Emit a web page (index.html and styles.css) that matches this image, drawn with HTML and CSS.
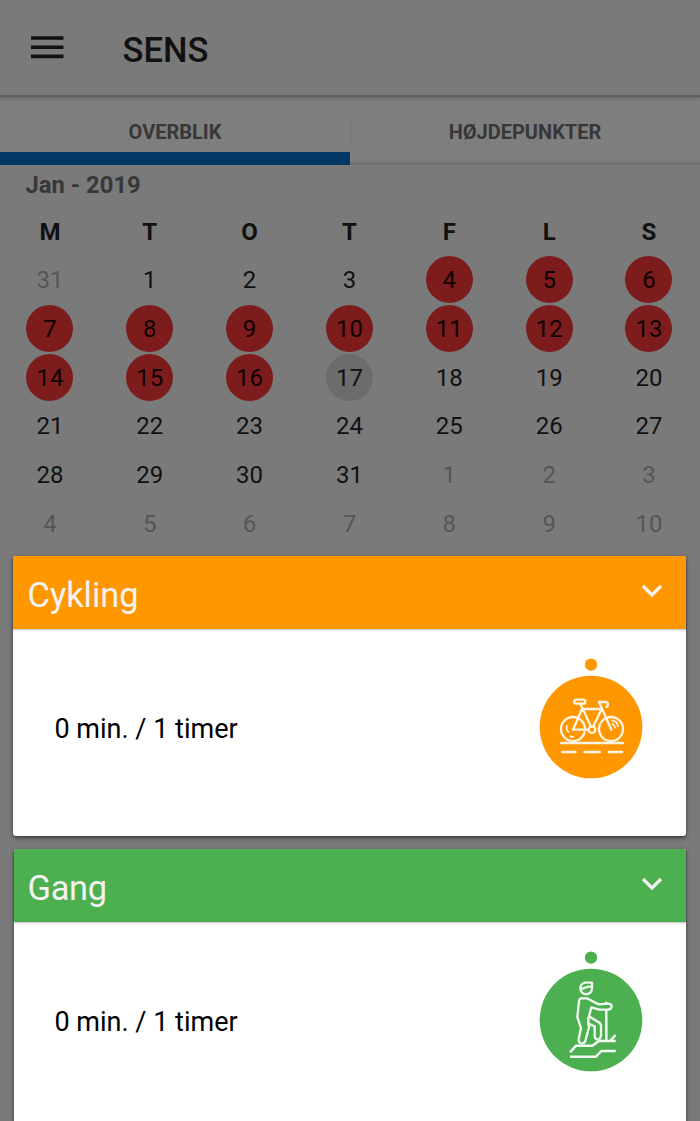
FILE: index.html
```html
<!DOCTYPE html>
<html lang="da">
<head>
<meta charset="utf-8">
<title>SENS</title>
<link rel="stylesheet" href="styles.css">
</head>
<body>
<header class="appbar">
  <svg class="menu" viewBox="0 0 33 23"><path d="M0 2h32.5M0 11.2h32.5M0 20.4h32.5"/></svg>
  <h1 class="title">SENS</h1>
</header>
<nav class="tabs">
  <div class="tab active">OVERBLIK</div>
  <div class="tab">HØJDEPUNKTER</div>
</nav>
<main>
  <h2 class="month">Jan - 2019</h2>
  <div class="calendar">
    <b>M</b><b>T</b><b>O</b><b>T</b><b>F</b><b>L</b><b>S</b>
    <span class="out">31</span><span>1</span><span>2</span><span>3</span><span class="red">4</span><span class="red">5</span><span class="red">6</span>
    <span class="red">7</span><span class="red">8</span><span class="red">9</span><span class="red">10</span><span class="red">11</span><span class="red">12</span><span class="red">13</span>
    <span class="red">14</span><span class="red">15</span><span class="red">16</span><span class="today">17</span><span>18</span><span>19</span><span>20</span>
    <span>21</span><span>22</span><span>23</span><span>24</span><span>25</span><span>26</span><span>27</span>
    <span>28</span><span>29</span><span>30</span><span>31</span><span class="out">1</span><span class="out">2</span><span class="out">3</span>
    <span class="out">4</span><span class="out">5</span><span class="out">6</span><span class="out">7</span><span class="out">8</span><span class="out">9</span><span class="out">10</span>
  </div>
  <div class="cards">
    <section class="card orange">
      <div class="card-head"><h3>Cykling</h3><svg class="chevron" viewBox="0 0 22 14"><path d="M2 2l9 9 9-9"/></svg></div>
      <div class="card-body">
        <p>0 min. / 1 timer</p>
        <svg class="activity" viewBox="27 21 312 366">
          <circle class="fill" cx="183" cy="44" r="18.5"/>
          <circle class="fill" cx="183" cy="231" r="154"/>
          <g class="line">
            <circle cx="129" cy="237" r="36"/>
            <circle cx="243" cy="237" r="36"/>
            <circle cx="186" cy="239" r="10"/>
            <path d="M151 161l32 69M155 179L129 239H176M162 177H213M215 177L190 229M244 239L207 156M151 161h-12a6 6 0 0 1 0-12h21a6 6 0 0 1 0 12zM207 156h22a8 8 0 0 1 0 15"/>
            <path d="M111 227q-4 12 5 19M121 259q5 3 9 1M246 212q16 1 18 17M247 222q7 2 8 11" stroke-width="5"/>
            <path d="M94 279H279M97 306H136M164 306H209M237 306H276" stroke-width="8"/>
          </g>
        </svg>
      </div>
    </section>
    <section class="card green">
      <div class="card-head"><h3>Gang</h3><svg class="chevron" viewBox="0 0 22 14"><path d="M2 2l9 9 9-9"/></svg></div>
      <div class="card-body">
        <p>0 min. / 1 timer</p>
        <svg class="activity" viewBox="27 21 312 366">
          <circle class="fill" cx="183" cy="44" r="18.5"/>
          <circle class="fill" cx="183" cy="231" r="154"/>
          <g class="line">
            <path d="M186 119h-21a17.5 17.5 0 1 0 21 17zM149 139C165 137 170 129 185 130"/>
            <path d="M153 166H171Q190 177 207 184L237 182Q246 185 245 191Q243 199 234 200H208L184 193L177 220L206 238Q213 241 213 250V278Q211 289 203 290Q195 289 194 279V250L175 242L177 252L166 294Q162 303 153 301Q145 298 146 289L153 255L142 222L147 174Q148 168 153 166z"/>
            <path d="M175 222V242M229 176V184M229 200V293M241 293L257 276M120 328L138 308H187L207 294H257M120 341H198L214 324H257" stroke-width="7.5"/>
          </g>
        </svg>
      </div>
    </section>
  </div>
</main>
</body>
</html>
```

FILE: styles.css
```css
* { box-sizing: border-box; }
body {
  margin: 0;
  height: 1121px;
  overflow: hidden;
  background: #7a7a7a;
  color: #111;
  font-family: Roboto, sans-serif;
}
h1, h2, h3, p { margin: 0; }
.appbar {
  position: relative;
  display: flex;
  align-items: center;
  height: 95px;
  padding: 2px 31px 0;
  background: #7a7a7a;
  box-shadow: 0 2px 1px #5d5f5e, 0 3px 5px rgba(0, 0, 0, .2);
}
.menu { width: 33px; height: 23px; margin-top: -2px; stroke: #111; stroke-width: 3.6; }
.title { margin: 2px 0 0 58.5px; font-size: 34.6px; font-weight: 500; line-height: 40px; }
.tabs { display: flex; height: 70px; background: #7e7e7e; }
.tab {
  flex: 1;
  height: 70px;
  padding-top: 27px;
  border-bottom: 3px solid #707070;
  color: #373737;
  font-size: 20px;
  font-weight: 700;
  line-height: 21px;
  text-align: center;
}
.tab.active {
  border-bottom: 13.5px solid #003765;
}
.tab:not(.active) {
  background: linear-gradient(#747474, #747474) left 21px / 1px 28px no-repeat;
}
.month { padding: 7px 25.5px 0; height: 42px; color: #373737; font-size: 23.8px; line-height: 26px; }
.calendar {
  display: grid;
  grid-template-columns: repeat(7, 99.85px);
  grid-auto-rows: 48.65px;
  place-items: center;
  font-size: 24px;
}
.calendar > * { width: 47px; height: 47px; border-radius: 50%; line-height: 48.6px; text-align: center; }
.red { background: #7c1c1c; color: #100000; }
.today { background: #6c6c6c; }
.out { color: #565656; }
.cards { display: flex; flex-direction: column; gap: 13px; padding: 9px 14px 0 13px; }
.card {
  height: 280px;
  border-radius: 3px;
  background: #fff;
  box-shadow: 0 2px 5px rgba(0, 0, 0, .4), 0 1px 2px rgba(0, 0, 0, .25);
}
.card-head {
  display: flex;
  align-items: center;
  justify-content: space-between;
  height: 73px;
  padding: 4px 23px 0 14.5px;
  border-radius: 3px 3px 0 0;
  background: var(--accent);
  box-shadow: 0 1px 2px rgba(0, 0, 0, .25);
}
.card-head h3 { margin-top: 1px; color: #f3f3f3; font-size: 34.4px; font-weight: 400; line-height: 42px; }
.chevron { width: 22px; height: 14px; margin-top: -7px; fill: none; stroke: #f3f3f3; stroke-width: 3.2; }
.card-body { display: flex; justify-content: space-between; padding: 28px 43px 0 41.5px; }
.card-body p { margin-top: 56px; color: #000; font-size: 27px; line-height: 32px; }
.activity { width: 104px; height: 122px; }
.fill { fill: var(--accent); }
.line { fill: none; stroke: #fff4e3; stroke-width: 7; stroke-linecap: round; stroke-linejoin: round; }
.green .line { stroke: #f1faf1; stroke-linecap: butt; }
.orange { --accent: #ff9800; }
.green { --accent: #4caf50; margin-left: 1px; }
.green .card-head { padding-left: 13.5px; }
.green .card-body { padding-left: 40.5px; }
.green h3 { letter-spacing: -.3px; }
```
